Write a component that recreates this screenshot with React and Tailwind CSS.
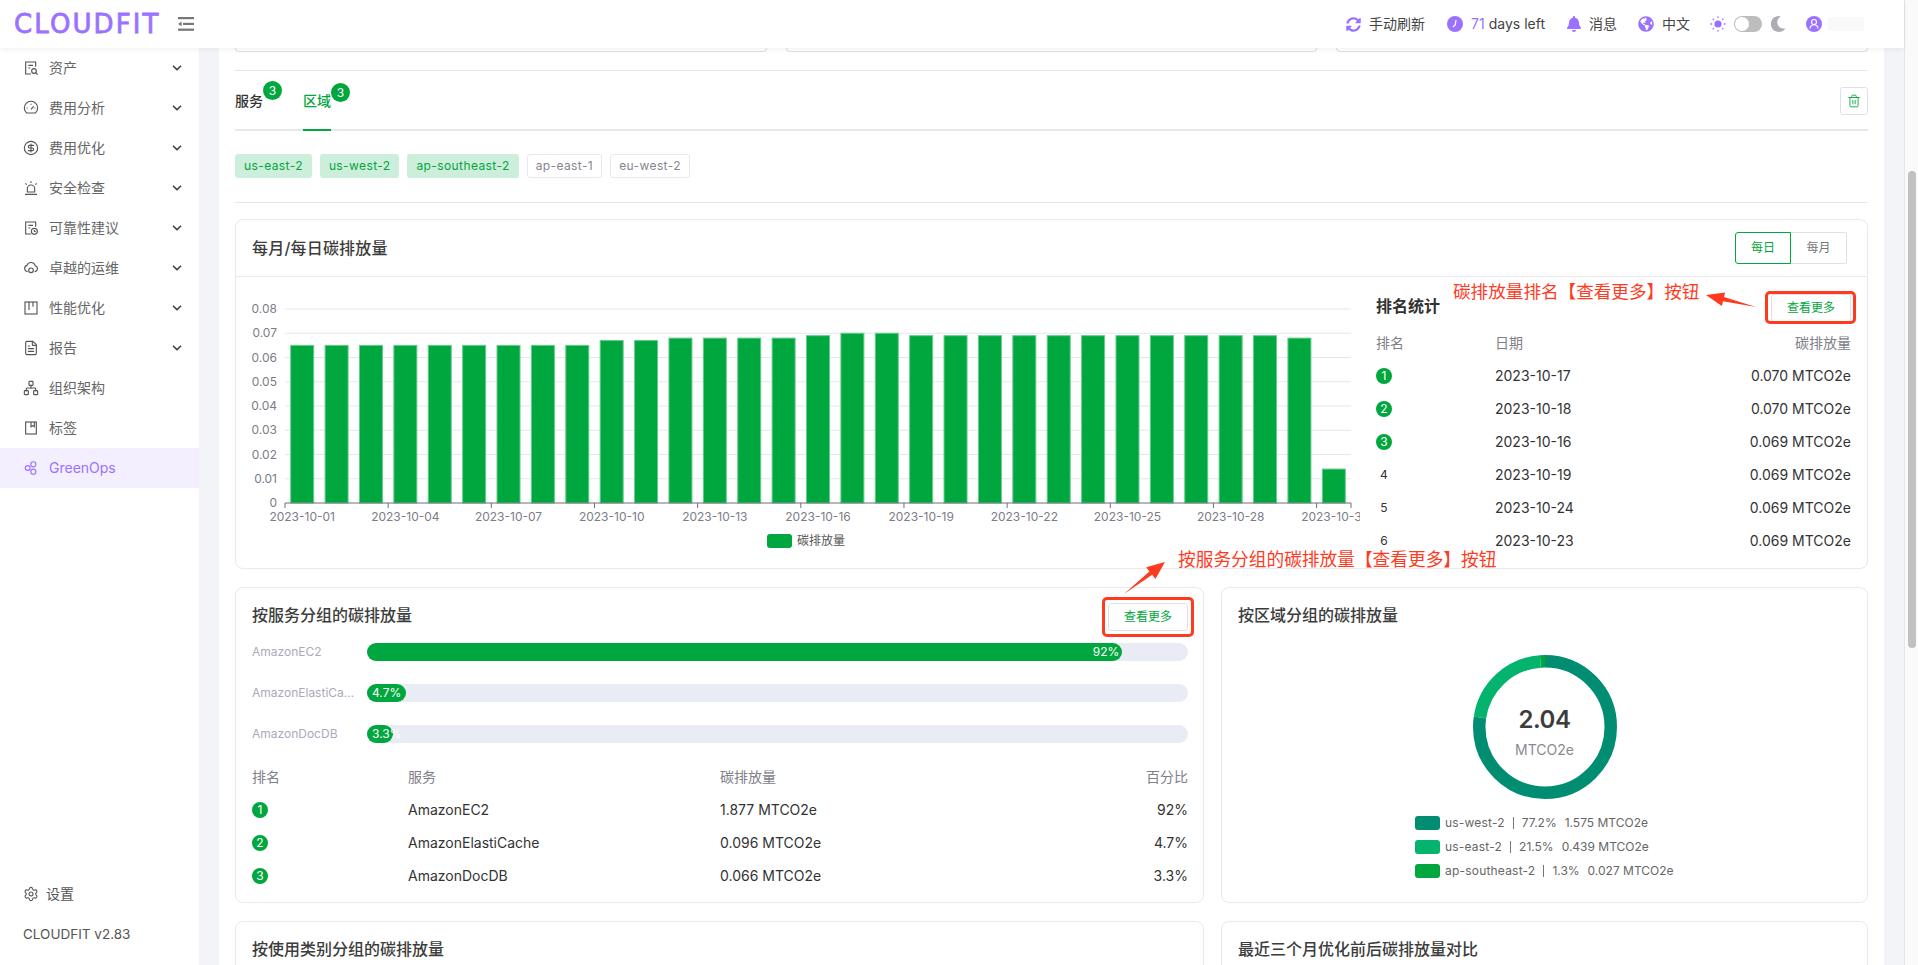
import React from 'react';
import { ChevronDown, CircleDollarSign, FileText, Network, Settings, Trash2 } from 'lucide-react';
import { FaSyncAlt, FaBell, FaGlobeAmericas, FaMoon } from 'react-icons/fa';

const Svg = ({ children, className = 'w-4 h-4' }) => (
  <svg viewBox="0 0 24 24" fill="none" stroke="currentColor" strokeWidth="1.7" className={className}>
    {children}
  </svg>
);

const AssetIcon = () => (
  <Svg>
    <path d="M19 10V3H4v18h8" />
    <path d="M8 8h7M8 12h3" />
    <circle cx="16.5" cy="16.5" r="3.5" />
    <path d="M19 19l3 3" />
  </Svg>
);
const GaugeIcon = () => (
  <Svg>
    <path d="M5.5 19.5a10 10 0 1 1 13 0z" />
    <path d="M12 14l4-4.5M5.5 12h1.5M12 5.5V7M17 12h1.5" />
  </Svg>
);
const AlarmIcon = () => (
  <Svg>
    <path d="M6.5 18v-5a5.5 5.5 0 0 1 11 0v5z" />
    <path d="M3 21.5h18M12 2v2.5M3.5 5l2 2M20.5 5l-2 2" />
  </Svg>
);
const AdviceIcon = () => (
  <Svg>
    <path d="M19 10V3H4v18h8" />
    <path d="M8 8h7M8 12h3" />
    <circle cx="17" cy="17" r="4.5" />
    <path d="M17 15v2.2h2" />
  </Svg>
);
const CloudIcon = () => (
  <Svg>
    <path d="M7 17.5a4.8 4.8 0 0 1-1-9.4 6.5 6.5 0 0 1 12.4 0.6 4.5 4.5 0 0 1-1 8.8" />
    <circle cx="12" cy="15.5" r="3.5" />
  </Svg>
);
const BoardIcon = () => (
  <Svg>
    <rect x="3" y="3" width="18" height="18" />
    <path d="M9 3v12M15 3v7" />
  </Svg>
);
const TagIcon = () => (
  <Svg>
    <rect x="4" y="3" width="16" height="18" />
    <path d="M12 3v7l2.5-1.5L17 10V3" />
  </Svg>
);
const OpsIcon = () => (
  <Svg>
    <circle cx="7" cy="12" r="3.6" />
    <circle cx="15.5" cy="6.5" r="3.8" />
    <circle cx="15.5" cy="17.5" r="3.8" />
  </Svg>
);

const menu = [
  { label: '资产', icon: <AssetIcon />, more: true },
  { label: '费用分析', icon: <GaugeIcon />, more: true },
  { label: '费用优化', icon: <CircleDollarSign className="w-4 h-4" strokeWidth={1.7} />, more: true },
  { label: '安全检查', icon: <AlarmIcon />, more: true },
  { label: '可靠性建议', icon: <AdviceIcon />, more: true },
  { label: '卓越的运维', icon: <CloudIcon />, more: true },
  { label: '性能优化', icon: <BoardIcon />, more: true },
  { label: '报告', icon: <FileText className="w-4 h-4" strokeWidth={1.7} />, more: true },
  { label: '组织架构', icon: <Network className="w-4 h-4" strokeWidth={1.7} /> },
  { label: '标签', icon: <TagIcon /> },
  { label: 'GreenOps', icon: <OpsIcon />, active: true },
];

const dailyValues = [
  0.065, 0.065, 0.065, 0.065, 0.065, 0.065, 0.065, 0.065, 0.065, 0.067, 0.067, 0.068, 0.068, 0.068, 0.068, 0.069,
  0.07, 0.07, 0.069, 0.069, 0.069, 0.069, 0.069, 0.069, 0.069, 0.069, 0.069, 0.069, 0.069, 0.068, 0.014,
];
const axisDates = ['01', '04', '07', '10', '13', '16', '19', '22', '25', '28', '31'];

const dateRanks = [
  ['2023-10-17', '0.070 MTCO2e'],
  ['2023-10-18', '0.070 MTCO2e'],
  ['2023-10-16', '0.069 MTCO2e'],
  ['2023-10-19', '0.069 MTCO2e'],
  ['2023-10-24', '0.069 MTCO2e'],
  ['2023-10-23', '0.069 MTCO2e'],
];

const services = [
  { name: 'AmazonEC2', width: 'w-[92%]', pct: '92%', co2: '1.877 MTCO2e', align: 'justify-end pr-[3px]' },
  { name: 'AmazonElastiCache', width: 'w-[39px]', pct: '4.7%', co2: '0.096 MTCO2e', align: 'pl-[5px]' },
  { name: 'AmazonDocDB', width: 'w-[26px]', pct: '3.3%', co2: '0.066 MTCO2e', align: 'pl-[5px]' },
];

const regions = [
  { name: 'us-west-2', pct: '77.2%', co2: '1.575 MTCO2e', swatch: 'bg-[#008d72]' },
  { name: 'us-east-2', pct: '21.5%', co2: '0.439 MTCO2e', swatch: 'bg-[#04b36e]' },
  { name: 'ap-southeast-2', pct: '1.3%', co2: '0.027 MTCO2e', swatch: 'bg-[#00a63e]' },
];

const Rank = ({ n }) =>
  n <= 3 ? (
    <span className="flex h-4 w-4 items-center justify-center rounded-full bg-[#00a63e] text-xs text-white">{n}</span>
  ) : (
    <span className="block w-4 text-center text-xs">{n}</span>
  );

const MoreButton = () => (
  <button className="h-7 w-20 rounded-[3px] border border-[#dfe1ea] bg-white text-xs text-[#00a63e]">查看更多</button>
);

const Sidebar = () => (
  <aside className="flex w-[199px] shrink-0 flex-col bg-white text-sm text-[#666]">
    {menu.map((item) => (
      <div
        key={item.label}
        className={`flex h-10 items-center pl-[23px] pr-[15px] ${item.active ? 'bg-[#f4effe] text-[#9b72ff]' : ''}`}
      >
        <span className={`mr-[10px] ${item.active ? '' : 'text-[#555]'}`}>{item.icon}</span>
        <span className="flex-1">{item.label}</span>
        {item.more && <ChevronDown className="h-[14px] w-[14px] text-[#444]" strokeWidth={3} />}
      </div>
    ))}
    <div className="mt-auto flex h-5 items-center pl-[23px] text-[#555]">
      <Settings className="mr-[7px] h-4 w-4" strokeWidth={1.6} />
      设置
    </div>
    <div className="mb-[21px] mt-5 h-5 pl-[23px] text-[13.5px] leading-5 text-[#555]">CLOUDFIT v2.83</div>
  </aside>
);

const Header = () => (
  <header className="relative z-10 flex h-12 shrink-0 items-center bg-white text-sm text-[#444] shadow-[0_1px_5px_rgba(0,0,0,0.07)]">
    <div className="ml-[14px] w-[164px] whitespace-nowrap text-[26px] font-normal leading-none tracking-[2.1px] text-[#9b72ff] [font-family:'DejaVu_Sans',sans-serif] [-webkit-text-stroke:0.8px_#9b72ff]">
      CLOUDFIT
    </div>
    <svg viewBox="0 0 16 14" className="h-[14px] w-4 text-[#777]" fill="currentColor">
      <rect x="0" y="0" width="16" height="2.2" />
      <rect x="5" y="5.8" width="11" height="2.2" />
      <rect x="0" y="11.6" width="16" height="2.2" />
      <path d="M0 6.9 3.6 4.6v4.6z" />
    </svg>
    <div className="ml-auto flex items-center pr-[40px]">
      <FaSyncAlt className="mr-2 h-[15px] w-[15px] text-[#9b72ff]" />
      <span className="mr-[22px]">手动刷新</span>
      <svg viewBox="0 0 16 16" className="mr-2 h-4 w-4">
        <circle cx="8" cy="8" r="8" fill="#9b72ff" />
        <path d="M9 4 8.3 8.6 6 11" stroke="#fff" strokeWidth="1.2" fill="none" />
      </svg>
      <span className="text-[#9b72ff]">71</span>
      <span className="ml-1 mr-[22px]">days left</span>
      <FaBell className="mr-2 h-4 w-[14px] text-[#9b72ff]" />
      <span className="mr-[21px]">消息</span>
      <FaGlobeAmericas className="mr-2 h-4 w-4 text-[#9b72ff]" />
      <span className="mr-5">中文</span>
      <svg viewBox="0 0 16 16" className="mr-2 h-4 w-4 text-[#9b72ff]" stroke="currentColor" strokeWidth="1.3">
        <circle cx="8" cy="8" r="3.6" fill="currentColor" stroke="none" />
        <path d="M8 .5v1.6M8 13.9v1.6M.5 8h1.6M13.9 8h1.6M2.7 2.7l1.1 1.1M12.2 12.2l1.1 1.1M2.7 13.3l1.1-1.1M12.2 3.8l1.1-1.1" />
      </svg>
      <span className="mr-2 flex h-4 w-7 items-center rounded-full bg-[#bdbdbd] pl-px">
        <span className="h-[14px] w-[14px] rounded-full bg-white" />
      </span>
      <FaMoon className="mr-5 h-4 w-4 text-[#adadb3]" />
      <svg viewBox="0 0 16 16" className="mr-[6px] h-4 w-4">
        <circle cx="8" cy="8" r="8" fill="#9b72ff" />
        <circle cx="8" cy="6" r="2.5" fill="none" stroke="#fff" strokeWidth="1.1" />
        <path d="M3.8 12.6c.6-2.4 2.2-3.8 4.2-3.8s3.6 1.4 4.2 3.8" fill="none" stroke="#fff" strokeWidth="1.1" />
      </svg>
      <span className="h-[14px] w-9 bg-[#f9f9f9]" />
    </div>
  </header>
);

const DailyChart = () => {
  const left = 285;
  const bottom = 503;
  const band = (1351 - 285) / 31;
  const unit = 2425;
  return (
    <svg viewBox="236 277 1124 292" className="h-[292px] w-[1124px] shrink-0">
      {[0.01, 0.02, 0.03, 0.04, 0.05, 0.06, 0.07, 0.08].map((v) => (
        <line key={v} x1={left} x2="1351" y1={bottom - v * unit} y2={bottom - v * unit} stroke="#e3e7f1" />
      ))}
      {[0, 0.01, 0.02, 0.03, 0.04, 0.05, 0.06, 0.07, 0.08].map((v) => (
        <text key={v} x="277" y={bottom - v * unit + 4} textAnchor="end" fontSize="12" fill="#7c7c86">
          {v === 0 ? '0' : v.toFixed(2)}
        </text>
      ))}
      {dailyValues.map((v, i) => (
        <rect
          key={i}
          x={left + i * band + 5.7}
          y={bottom - v * unit}
          width="23"
          height={v * unit}
          fill="#00a63e"
          stroke="#66cc8c"
          strokeWidth="1"
        />
      ))}
      <line x1={left} x2="1351" y1={bottom} y2={bottom} stroke="#6e7079" />
      {axisDates.map((d, i) => (
        <g key={d}>
          <line x1={left + i * 3 * band} x2={left + i * 3 * band} y1={bottom} y2={bottom + 5} stroke="#6e7079" />
          <text x={left + i * 3 * band + band / 2} y="521" textAnchor="middle" fontSize="12" fill="#7c7c86">
            2023-10-{d}
          </text>
        </g>
      ))}
      <line x1="1351" x2="1351" y1={bottom} y2={bottom + 5} stroke="#6e7079" />
      <rect x="767" y="534" width="25" height="14" rx="3" fill="#00a63e" />
      <text x="797" y="545" fontSize="12" fill="#555">碳排放量</text>
    </svg>
  );
};

const Donut = () => {
  const r = 65.75;
  const c = 2 * Math.PI * r;
  const parts = [
    { pct: 77.2, color: '#008d72', start: 0 },
    { pct: 21.5, color: '#04b36e', start: 77.2 },
    { pct: 1.3, color: '#00a63e', start: 98.7 },
  ];
  return (
    <div className="relative h-36 w-36">
      <svg viewBox="0 0 144 144" className="h-36 w-36 -rotate-90">
        {parts.map((p) => (
          <circle
            key={p.color}
            cx="72"
            cy="72"
            r={r}
            fill="none"
            stroke={p.color}
            strokeWidth="12.5"
            strokeDasharray={`${(p.pct / 100) * c} ${c}`}
            strokeDashoffset={(-p.start / 100) * c}
          />
        ))}
      </svg>
      <div className="absolute inset-0 flex flex-col items-center pt-[49px]">
        <span className="h-8 text-2xl font-semibold leading-8 tracking-[-0.5px] text-[#3c3c3c]">2.04</span>
        <span className="mt-1 text-sm leading-5 text-[#8a8a92]">MTCO2e</span>
      </div>
    </div>
  );
};

const Card = ({ className = '', children }) => (
  <div className={`rounded-lg border border-[#e9e9ee] bg-white ${className}`}>{children}</div>
);

export default function App() {
  return (
    <div className="relative flex h-[965px] w-[1918px] overflow-hidden bg-[#fafafa] font-[Inter,'Noto_Sans_CJK_SC',sans-serif]">
      <div className="flex w-[1905px] shrink-0 flex-col border-r border-[#e6e6ea] bg-[#f3f4f8]">
        <Header />
        <div className="flex min-h-0 flex-1">
          <Sidebar />
          <main className="mx-5 flex min-w-0 flex-1 flex-col overflow-hidden bg-white px-4">
            <div className="grid shrink-0 grid-cols-3 gap-[19px]">
              <div className="h-1 rounded-b-md border border-t-0 border-[#dedee6]" />
              <div className="h-1 rounded-b-md border border-t-0 border-[#dedee6]" />
              <div className="h-1 rounded-b-md border border-t-0 border-[#dedee6]" />
            </div>
            <div className="mt-[18px] h-px shrink-0 bg-[#e8e8ec]" />

            <div className="flex h-[60px] shrink-0 items-center border-b-2 border-[#e8e8ea] pt-[2px] text-sm">
              <div className="relative font-medium text-[#333]">
                服务
                <span className="absolute left-7 top-[-10px] flex h-[19px] w-[19px] items-center justify-center rounded-full bg-[#00a63e] text-xs font-normal text-white">
                  3
                </span>
              </div>
              <div className="relative ml-10 h-full font-medium text-[#00a63e]">
                <span className="flex h-full items-center">区域</span>
                <span className="absolute left-7 top-[10px] flex h-[19px] w-[19px] items-center justify-center rounded-full bg-[#00a63e] text-xs font-normal text-white">
                  3
                </span>
                <span className="absolute bottom-[-2px] left-0 h-[2px] w-7 bg-[#00a63e]" />
              </div>
              <button className="ml-auto flex h-7 w-7 items-center justify-center rounded-[3px] border border-[#dfe1ea] text-[#00a63e]">
                <Trash2 className="h-[14px] w-[14px]" strokeWidth={1.5} />
              </button>
            </div>

            <div className="mt-[23px] flex shrink-0 gap-2 text-xs tracking-[0.4px]">
              {['us-east-2', 'us-west-2', 'ap-southeast-2'].map((t) => (
                <span key={t} className="flex h-6 items-center rounded-[3px] bg-[#cdeedb] px-[9px] text-[#00a63e]">
                  {t}
                </span>
              ))}
              {['ap-east-1', 'eu-west-2'].map((t) => (
                <span key={t} className="flex h-6 items-center rounded-[3px] border border-[#e8e8ee] px-2 text-[#85858f]">
                  {t}
                </span>
              ))}
            </div>
            <div className="mt-6 h-px shrink-0 bg-[#e8e8ec]" />

            <Card className="mt-4 h-[350px] shrink-0 overflow-hidden">
              <div className="flex h-[57px] items-center justify-between border-b border-[#e9e9ee] pl-4 pr-[20px]">
                <h3 className="text-base font-medium tracking-[0.2px] text-[#3c3c3c]">每月/每日碳排放量</h3>
                <div className="flex text-xs">
                  <span className="flex h-8 w-14 items-center justify-center rounded-l-[3px] border border-[#00a63e] text-[#00a63e]">每日</span>
                  <span className="flex h-8 w-14 items-center justify-center rounded-r-[3px] border border-l-0 border-[#dfe1ea] text-[#777]">每月</span>
                </div>
              </div>
              <div className="flex">
                <DailyChart />
                <div className="min-w-0 flex-1 pl-4 pr-4 pt-[17px] text-sm text-[#333]">
                  <div className="flex h-[27px] items-center justify-between">
                    <span className="mb-1 text-base font-semibold">排名统计</span>
                    <MoreButton />
                  </div>
                  <div className="mt-[5px] grid h-[33px] grid-cols-[119px_1fr_auto] items-center text-[#808089]">
                    <span>排名</span>
                    <span>日期</span>
                    <span>碳排放量</span>
                  </div>
                  {dateRanks.map((row, i) => (
                    <div key={row[0]} className="grid h-[33px] grid-cols-[119px_1fr_auto] items-center">
                      <Rank n={i + 1} />
                      <span>{row[0]}</span>
                      <span>{row[1]}</span>
                    </div>
                  ))}
                </div>
              </div>
            </Card>

            <div className="mt-[18px] grid h-[316px] shrink-0 grid-cols-[969px_1fr] gap-x-[17px]">
              <Card className="pl-4 pr-[15px] pt-[15px]">
                <div className="flex h-7 items-center justify-between">
                  <h3 className="mb-1 text-base font-medium text-[#3c3c3c]">按服务分组的碳排放量</h3>
                  <MoreButton />
                </div>
                <div className="mt-3 flex flex-col gap-[23px] text-xs">
                  {services.map((s) => (
                    <div key={s.name} className="flex h-[18px] items-center">
                      <span className="mr-3 w-[103px] truncate text-[#aaaabc]">{s.name}</span>
                      <div className="h-[18px] flex-1 rounded-full bg-[#e9ecf4]">
                        <div className={`flex h-full items-center whitespace-nowrap rounded-full bg-[#00a63e] text-white ${s.width} ${s.align}`}>
                          {s.pct}
                        </div>
                      </div>
                    </div>
                  ))}
                </div>
                <div className="mt-[17px] text-sm text-[#333]">
                  <div className="grid h-[33px] grid-cols-[156px_312px_1fr_auto] items-center text-[#808089]">
                    <span>排名</span>
                    <span>服务</span>
                    <span>碳排放量</span>
                    <span>百分比</span>
                  </div>
                  {services.map((s, i) => (
                    <div key={s.name} className="grid h-[33px] grid-cols-[156px_312px_1fr_auto] items-center">
                      <Rank n={i + 1} />
                      <span>{s.name}</span>
                      <span>{s.co2}</span>
                      <span>{s.pct}</span>
                    </div>
                  ))}
                </div>
              </Card>

              <Card className="pl-4 pt-[15px]">
                <h3 className="flex h-6 items-center text-base font-medium text-[#3c3c3c]">按区域分组的碳排放量</h3>
                <div className="mr-4 mt-7 flex justify-center">
                  <Donut />
                </div>
                <div className="mt-3 flex flex-col pl-[177px] text-xs text-[#666]">
                  {regions.map((r) => (
                    <div key={r.name} className="flex h-6 items-center">
                      <span className={`mr-[5px] h-[14px] w-[25px] rounded-[3px] ${r.swatch}`} />
                      <span className="tracking-[0.2px]">{r.name}</span>
                      <span className="mx-2 h-3 w-px bg-[#777]" />
                      <span>{r.pct}</span>
                      <span className="ml-2">{r.co2}</span>
                    </div>
                  ))}
                </div>
              </Card>
            </div>

            <div className="mt-[18px] grid shrink-0 grid-cols-[969px_1fr] gap-x-[17px]">
              <Card className="h-20 pl-4 pt-4">
                <h3 className="text-base font-medium leading-[22px] text-[#3c3c3c]">按使用类别分组的碳排放量</h3>
              </Card>
              <Card className="h-20 pl-4 pt-4">
                <h3 className="text-base font-medium leading-[22px] text-[#3c3c3c]">最近三个月优化前后碳排放量对比</h3>
              </Card>
            </div>
          </main>
        </div>
      </div>

      <div className="flex-1 pl-[3px] pt-[171px]">
        <div className="h-[477px] w-2 rounded-full bg-[#c1c1c1]" />
      </div>

      {/* 红色标注 */}
      <span className="absolute left-[1453px] top-[280px] whitespace-nowrap text-[17.6px] leading-6 text-[#ff3b1f]">碳排放量排名【查看更多】按钮</span>
      <span className="absolute left-[1178px] top-[548px] whitespace-nowrap text-[17.7px] leading-6 text-[#ff3b1f]">按服务分组的碳排放量【查看更多】按钮</span>
      <div className="absolute left-[1765px] top-[291px] h-[33px] w-[91px] rounded-[5px] border-[3px] border-[#ff3b1f]" />
      <div className="absolute left-[1102px] top-[597px] h-10 w-[92px] rounded-[5px] border-[3px] border-[#ff3b1f]" />
      <svg viewBox="0 0 1918 965" className="pointer-events-none absolute inset-0 h-[965px] w-[1918px]" fill="#ff3b1f">
        <polygon points="1756,307 1724,297.1 1725.1,292.4 1706,295 1721.9,306 1723,301.3" />
        <polygon points="1124,594 1152.2,574.8 1155.4,579 1165,562 1146.2,567.2 1149.4,571.4" />
      </svg>
    </div>
  );
}
